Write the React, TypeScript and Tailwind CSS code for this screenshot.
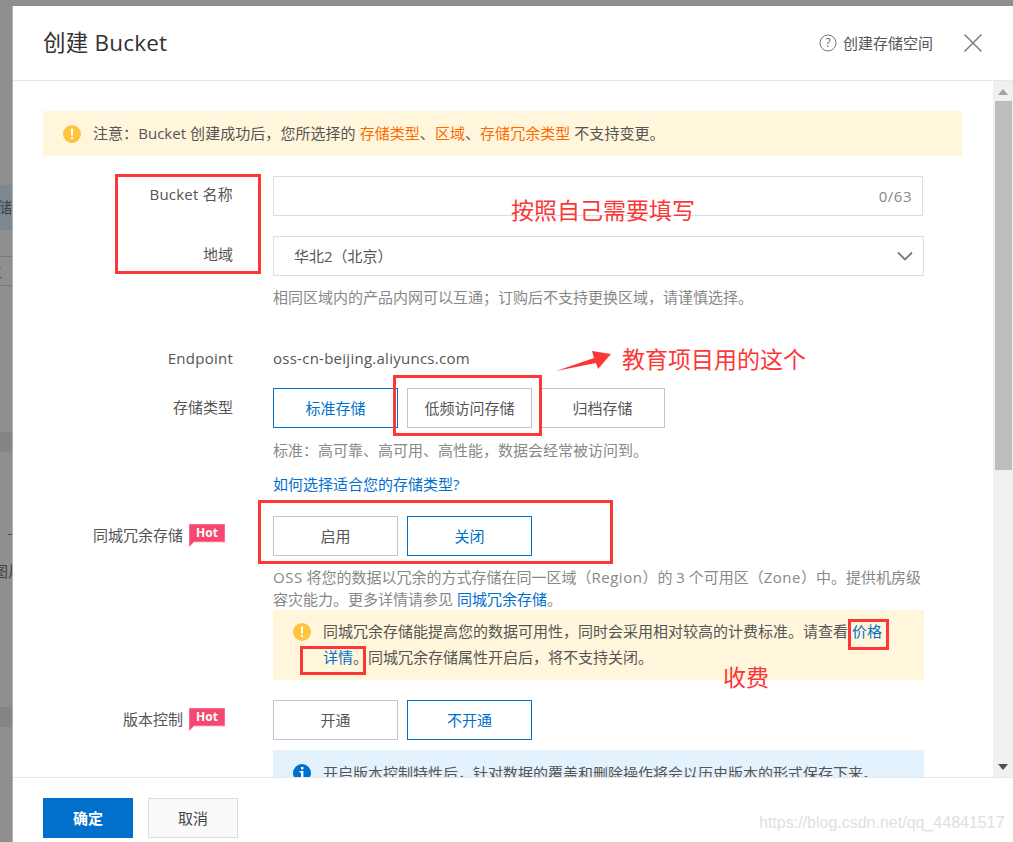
import React from "react";

const font = "font-['Open_Sans','Noto_Sans_CJK_SC',sans-serif]";

const Choice: React.FC<{ label: string; active?: boolean; className?: string }> = ({ label, active, className }) => (
    <button
        type="button"
        className={`w-[125px] h-10 border flex items-center justify-center text-[15px] ${active ? "border-[#0070cc] text-[#0070cc]" : "border-[#c4c6cf] text-[#555]"} ${className ?? ""}`}
    >
        {label}
    </button>
);

const HotBadge = () => (
    <svg width="36" height="23" viewBox="0 0 36 23" className="ml-[6px] shrink-0">
        <path d="M0 0H36V18H5L0 23Z" fill="#f5476f" stroke="#ffa9bf" strokeWidth="0.8" />
        <text x="18" y="13" textAnchor="middle" fontSize="12" fontWeight="700" fill="#fff" fontFamily="Open Sans, sans-serif">Hot</text>
    </svg>
);

const WarnIcon: React.FC<{ className?: string }> = ({ className }) => (
    <svg width="18" height="18" viewBox="0 0 18 18" className={`shrink-0 ${className ?? ""}`}>
        <circle cx="9" cy="9" r="9" fill="#ffc440" />
        <rect x="8" y="3.5" width="2" height="7" fill="#fff" />
        <rect x="8" y="12" width="2" height="2" fill="#fff" />
    </svg>
);

const Label: React.FC<{ children: React.ReactNode; hot?: boolean; className?: string }> = ({ children, hot, className }) => (
    <div className={`w-[190px] flex justify-end shrink-0 text-[15px] text-[#555] leading-[20px] ${className ?? ""}`}>
        {hot ? (
            <span className="flex items-center mr-[8px]">
                {children}
                <HotBadge />
            </span>
        ) : (
            children
        )}
    </div>
);

export default function App() {
    return (
        <div className={`relative w-[1013px] h-[842px] overflow-hidden flex bg-[#8f8f8f] pt-[6px] ${font}`}>
            {/* page behind the dialog */}
            <div className="w-[13px] shrink-0 flex flex-col text-[15px] text-[#444] overflow-hidden border-r border-[#b0b0b0]">
                <div className="h-[179px] shrink-0" />
                <div className="h-[45px] shrink-0 bg-[#7e8794] flex items-center justify-end">
                    <span className="whitespace-nowrap">储</span>
                </div>
                <div className="h-[27px] shrink-0 border-b border-[#7a7a7a]" />
                <div className="h-[29px] shrink-0 border-b border-[#7a7a7a] flex items-center">
                    <span className="whitespace-nowrap -ml-[13px]">主</span>
                </div>
                <div className="h-[146px] shrink-0" />
                <div className="h-[20px] shrink-0 bg-[#858585]" />
                <div className="h-[82px] shrink-0" />
                <div className="h-[1px] w-[5px] ml-[8px] shrink-0 bg-[#1b5f9c]" />
                <div className="h-[26px] shrink-0" />
                <div className="h-[20px] flex shrink-0 items-center"><span className="whitespace-nowrap -ml-[7px]">图片</span></div>
                <div className="h-[126px] shrink-0" />
                <div className="h-[20px] shrink-0 bg-[#858585]" />
            </div>

            <div className="flex-1 min-w-0 bg-white flex flex-col">
                <header className="h-[75px] shrink-0 border-b border-[#e6e7eb] flex items-center pl-[30px] pr-[30px]">
                    <h1 className="text-[22.5px] text-[#333] tracking-[0.2px]">创建 Bucket</h1>
                    <span className="ml-auto flex items-center gap-[6px] text-[15px] text-[#555]">
                        <svg width="18" height="18" viewBox="0 0 18 18" fill="none" stroke="#777">
                            <circle cx="9" cy="9" r="8" />
                            <text x="9" y="13" textAnchor="middle" fontSize="12" stroke="none" fill="#666">?</text>
                        </svg>
                        创建存储空间
                    </span>
                    <svg width="20" height="20" viewBox="0 0 20 20" className="ml-[30px]" stroke="#808080" strokeWidth="1.6">
                        <path d="M1.5 1.5L18.5 18.5M18.5 1.5L1.5 18.5" />
                    </svg>
                </header>

                <div className="flex-1 min-h-0 flex">
                    <main className="flex-1 min-w-0 overflow-hidden pt-[30px] pl-[30px] pr-[31px]">
                        <div className="h-[45px] w-[919px] bg-[#fff6dc] flex items-center pl-[20px] gap-[12px] text-[15px] tracking-[0.05px] text-[#555] whitespace-nowrap">
                            <WarnIcon />
                            <span>
                                注意：Bucket 创建成功后，您所选择的 <span className="text-[#ff6a00]">存储类型</span>、<span className="text-[#ff6a00]">区域</span>、<span className="text-[#ff6a00]">存储冗余类型</span> 不支持变更。
                            </span>
                        </div>

                        <div className="mt-[20px] flex">
                            <Label className="pt-[8px] tracking-[0.2px]">Bucket 名称</Label>
                            <div className="ml-[40px] w-[650px] h-10 border border-[#dcdee3] flex items-center justify-end pr-[10px] text-[15px] tracking-[0.5px] text-[#888]">0/63</div>
                        </div>

                        <div className="mt-[20px] flex">
                            <Label className="pt-[8px]">地域</Label>
                            <div className="ml-[40px] w-[651px] h-10 border border-[#dcdee3] flex items-center pl-[20px] pr-[10px] text-[15px] text-[#555]">
                                华北2（北京）
                                <svg width="16" height="10" viewBox="0 0 16 10" fill="none" stroke="#777" strokeWidth="1.8" className="ml-auto">
                                    <path d="M1 1.5L8 8.5L15 1.5" />
                                </svg>
                            </div>
                        </div>

                        <p className="ml-[230px] mt-[10px] text-[15px] leading-[22px] text-[#888]">相同区域内的产品内网可以互通；订购后不支持更换区域，请谨慎选择。</p>

                        <div className="mt-[39px] flex items-center text-[15px] text-[#555] h-[22px]">
                            <Label className="tracking-[0.25px]">Endpoint</Label>
                            <span className="ml-[40px] tracking-[0.26px]">oss-cn-beijing.aliyuncs.com</span>
                        </div>

                        <div className="mt-[19px] flex items-center">
                            <Label className="pb-[2px]">存储类型</Label>
                            <div className="ml-[40px] flex gap-[9px]">
                                <Choice label="标准存储" active />
                                <Choice label="低频访问存储" />
                                <Choice label="归档存储" className="-ml-[1px]" />
                            </div>
                        </div>

                        <p className="ml-[230px] mt-[11px] text-[15px] leading-[22px] text-[#888]">标准：高可靠、高可用、高性能，数据会经常被访问到。</p>
                        <p className="ml-[230px] mt-[12px] text-[15px] leading-[22px] text-[#0070cc]">如何选择适合您的存储类型?</p>

                        <div className="mt-[21px] flex items-center">
                            <Label hot className="pb-[2px]">同城冗余存储</Label>
                            <div className="ml-[40px] flex gap-[9px]">
                                <Choice label="启用" />
                                <Choice label="关闭" active />
                            </div>
                        </div>

                        <p className="ml-[230px] mt-[10px] w-[651px] text-[15px] leading-[22px] text-[#888]">
                            <span className="tracking-[0.5px]">OSS</span> 将您的数据以冗余的方式存储在同一区域（<span className="tracking-[0.5px]">Region</span>）的 3 个可用区（<span className="tracking-[0.5px]">Zone</span>）中。提供机房级容灾能力。更多详情请参见 <span className="text-[#0070cc]">同城冗余存储</span>。
                        </p>

                        <div className="ml-[230px] w-[651px] h-[70px] bg-[#fff6dc] flex pl-[20px] pr-[35px] pt-[8px] gap-[12px] text-[15px] leading-[26px] text-[#555]">
                            <WarnIcon className="mt-[5px]" />
                            <p>
                                同城冗余存储能提高您的数据可用性，同时会采用相对较高的计费标准。请查看 <span className="text-[#0070cc]">价格详情</span>。同城冗余存储属性开启后，将不支持关闭。
                            </p>
                        </div>

                        <div className="mt-[20px] flex items-center">
                            <Label hot className="pb-[2px]">版本控制</Label>
                            <div className="ml-[40px] flex gap-[9px]">
                                <Choice label="开通" />
                                <Choice label="不开通" active />
                            </div>
                        </div>

                        <div className="ml-[230px] mt-[10px] w-[651px] h-[70px] bg-[#e3f2fd] flex pl-[20px] pt-[10px] gap-[12px] text-[15px] leading-[26px] text-[#555]">
                            <svg width="18" height="18" viewBox="0 0 18 18" className="shrink-0 mt-[4px]">
                                <circle cx="9" cy="9" r="9" fill="#0070cc" />
                                <rect x="8" y="3" width="2.4" height="2.4" fill="#fff" />
                                <path d="M6.5 7H10.4V13H12V14.5H6.5V13H8V8.5H6.5Z" fill="#fff" />
                            </svg>
                            <p>开启版本控制特性后，针对数据的覆盖和删除操作将会以历史版本的形式保存下来。</p>
                        </div>
                    </main>

                    {/* scrollbar */}
                    <div className="w-[20px] shrink-0 bg-[#f0f0f0] flex flex-col items-center">
                        <svg width="10" height="6" viewBox="0 0 10 6" className="mt-[8px] mb-[6px] shrink-0"><path d="M0 6L5 0L10 6Z" fill="#a3a3a3" /></svg>
                        <div className="w-[17px] h-[369px] bg-[#bdbdbd] shrink-0" />
                        <svg width="10" height="6" viewBox="0 0 10 6" className="mt-auto mb-[7px] shrink-0"><path d="M0 0L5 6L10 0Z" fill="#505050" /></svg>
                    </div>
                </div>

                <footer className="h-[65px] shrink-0 border-t border-[#e6e7eb] flex items-start pt-[20px] pl-[30px] gap-[15px] text-[15px]">
                    <button type="button" className="w-[90px] h-10 bg-[#0070cc] text-white font-semibold">确定</button>
                    <button type="button" className="w-[90px] h-10 bg-[#fafafa] border border-[#dcdee3] text-[#444]">取消</button>
                </footer>
            </div>

            {/* annotations drawn on top of the screenshot */}
            <div className="absolute left-[115px] top-[174px] w-[146px] h-[100px] border-[3px] border-[#fc3737]" />
            <div className="absolute left-[393px] top-[375px] w-[149px] h-[61px] border-[3px] border-[#fc3737]" />
            <div className="absolute left-[258px] top-[500px] w-[355px] h-[64px] border-[3px] border-[#fc3737]" />
            <div className="absolute left-[848px] top-[619px] w-[41px] h-[31px] border-[3px] border-[#fc3737]" />
            <div className="absolute left-[300px] top-[646px] w-[66px] h-[29px] border-[3px] border-[#fc3737]" />
            <span className="absolute left-[511px] top-[195px] text-[23px] leading-[30px] text-[#fc3737] whitespace-nowrap">按照自己需要填写</span>
            <span className="absolute left-[622px] top-[344px] text-[23px] leading-[30px] text-[#fc3737] whitespace-nowrap">教育项目用的这个</span>
            <span className="absolute left-[723px] top-[662px] text-[23px] leading-[30px] text-[#fc3737] whitespace-nowrap">收费</span>
            <svg width="56" height="22" viewBox="0 0 56 22" className="absolute left-[556px] top-[350px]">
                <path d="M0 21L38 8L36 1L55 4L42 19L40 13Z" fill="#fc3737" />
            </svg>
            <span className="absolute left-[759px] top-[811px] text-[16px] leading-[24px] text-[#e0e0e0] font-['Liberation_Sans',sans-serif] whitespace-nowrap">https://blog.csdn.net/qq_44841517</span>
        </div>
    );
}
